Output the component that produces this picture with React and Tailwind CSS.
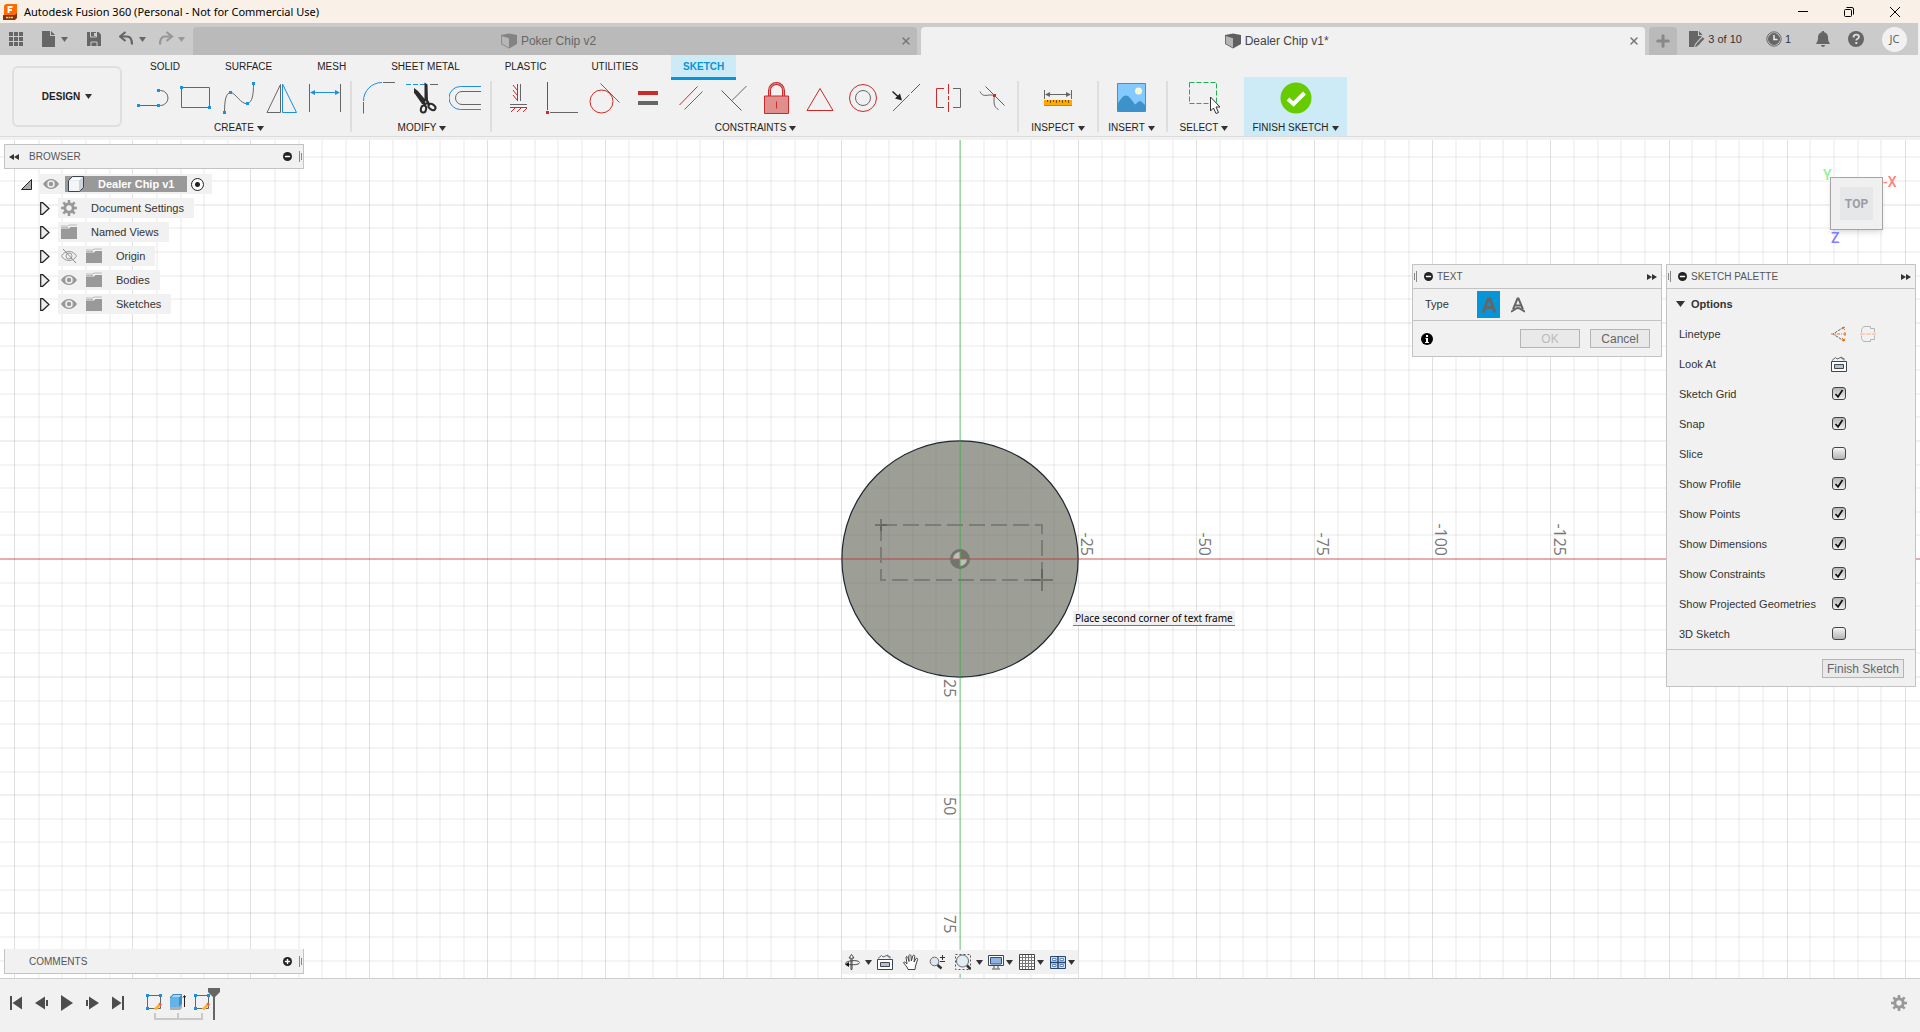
import { Minus, Plus, X } from 'lucide-react';

const BLUE = '#1a8fe3';
const RED = '#cc2a2a';
const GRAY = '#666666';

const TABS = ['SOLID', 'SURFACE', 'MESH', 'SHEET METAL', 'PLASTIC', 'UTILITIES', 'SKETCH'];

const TREE = [
  { name: 'Document Settings', icon: 'gear' },
  { name: 'Named Views', icon: 'folder' },
  { name: 'Origin', icon: 'folder', eye: 'hidden' },
  { name: 'Bodies', icon: 'folder', eye: 'visible' },
  { name: 'Sketches', icon: 'folder', eye: 'visible' },
];

const OPTIONS = [
  { name: 'Sketch Grid', on: true },
  { name: 'Snap', on: true },
  { name: 'Slice', on: false },
  { name: 'Show Profile', on: true },
  { name: 'Show Points', on: true },
  { name: 'Show Dimensions', on: true },
  { name: 'Show Constraints', on: true },
  { name: 'Show Projected Geometries', on: true },
  { name: '3D Sketch', on: false },
];

// Grid: one major cell is 25 mm, split in five
const MAJOR = 118.1;
const MINOR = MAJOR / 5;
const GRID_STEPS = Array.from({ length: 121 }, (_, i) => i - 60);

function Caret({ className = 'text-[#333]' }) {
  return (
    <svg className={`w-[7px] h-[5px] shrink-0 ${className}`} viewBox="0 0 7 5" fill="currentColor">
      <path d="M0 0h7L3.5 5z" />
    </svg>
  );
}

function Icon({ size = 'w-8 h-8', box = 32, children }) {
  return (
    <svg className={`${size} shrink-0`} viewBox={`0 0 ${box} ${box}`} fill="none" stroke={GRAY} strokeWidth="1">
      {children}
    </svg>
  );
}

function Small({ children }) {
  return <Icon size="w-4 h-4" box={16}>{children}</Icon>;
}

function Node({ x, y, color = BLUE }) {
  return <rect x={x - 1.5} y={y - 1.5} width="3" height="3" fill={color} stroke="none" />;
}

/* ---------- ribbon drawings ---------- */

const CREATE = [
  { name: 'Line', art: <><path d="M1.5 23.5h20M21.5 8.5h2a7.5 7.5 0 0 1 0 15h-2" /><Node x={1.5} y={23.5} /><Node x={21.5} y={23.5} /><Node x={21.5} y={8.5} /></> },
  { name: 'Rectangle', art: <><path d="M1.5 5.5h28v20h-28z" /><Node x={1.5} y={5.5} /><Node x={29.5} y={25.5} /></> },
  { name: 'Spline', art: <><path d="M1.5 30.5C1.5 18 3 11 7.5 10.5S18 23 24.5 21.5c5-1.5 6-9 6-20" /><Node x={1.5} y={30.5} /><Node x={7.5} y={10.5} /><Node x={24.5} y={21.5} /><Node x={30.5} y={1.5} /></> },
  { name: 'Mirror', art: <><path d="M1 30.5 14.5 2.5v28z" /><path d="M16.5 2v28.5h14z" stroke={BLUE} /></> },
  { name: 'Dimension', art: <><path d="M.5 2v28M31.5 2v28" /><path d="M3 10.5h26" stroke={BLUE} /><path d="M1 10.5l5-2.5v5zM31 10.5l-5-2.5v5z" fill={BLUE} stroke="none" /></> },
];

const MODIFY = [
  { name: 'Fillet', art: <><path d="M.5 20v11.5M20 .5h12" /><path d="M.5 19A18.5 18.5 0 0 1 19 .5" stroke={BLUE} /></> },
  {
    name: 'Trim',
    art: (
      <>
        <path d="M0 2.5h20" stroke={BLUE} strokeDasharray="5 2" />
        <path d="M24 2.5h8" />
        <path d="M18.5 .5 21.5 2.5 22 20l-3.5-3zM8 6l4 3 8 9.5-2 3.5h-2L9 12l-1-1z" fill="#2b2b2b" stroke="none" />
        <g stroke="#2b2b2b" strokeWidth="2">
          <ellipse cx="17.5" cy="27" rx="2.6" ry="3.6" transform="rotate(12 17.5 27)" />
          <ellipse cx="26" cy="25" rx="3.8" ry="2.6" transform="rotate(35 26 25)" />
          <path d="M19.5 17l3.5 5.5M20.5 18l-2 5.5" strokeWidth="3" />
        </g>
        <circle cx="19.7" cy="20" r=".8" fill="#f1f1f1" stroke="none" />
      </>
    ),
  },
  { name: 'Offset', art: <><path d="M32 4.5H11.5a11.5 11.5 0 0 0 0 23H32" stroke={BLUE} /><path d="M32 9.5H13a6.5 6.5 0 0 0 0 13h19" /></> },
];

const CONSTRAINTS = [
  { name: 'Horizontal/Vertical', art: <><path d="M17.5 2v17M7 22.5h17" /><path d="M14.5 2v17M7 25.5h17M10 3l4 5M10 8l4 5M10 13l4 5M12 26l-4 4M18 26l-4 4M24 26l-4 4" stroke={RED} /></> },
  { name: 'Coincident', art: <><path d="M4 30.5h28" /><path d="M1.5 0v28" stroke={RED} /><Node x={1.5} y={30.5} color={RED} /></> },
  { name: 'Tangent', art: <><path d="M11.5 1.5l19 19" /><circle cx="12.5" cy="19.5" r="11.5" stroke={RED} /></> },
  { name: 'Equal', art: <><path d="M6 9h20v4H6z" fill={RED} stroke="none" /><path d="M6 19h20v4H6z" fill={GRAY} stroke="none" /></> },
  { name: 'Parallel', art: <><path d="M4.5 23l18-18.5" stroke={RED} /><path d="M9.5 27.5l18-18" /></> },
  { name: 'Perpendicular', art: <><path d="M14 18.5 28.5 4" /><path d="M3.5 8.5l20 20" stroke={RED} /></> },
  { name: 'Fix', art: <><path d="M8.5 14V8.5a7 7 0 0 1 14 0V14" stroke={RED} strokeWidth="3" /><path d="M8.5 14V8.5a7 7 0 0 1 14 0V14" stroke="#e39a9a" /><path d="M3.5 14h24v17.5h-24z" fill="#e08f8f" stroke={RED} /><path d="M15.5 19.5v7" stroke={RED} /></> },
  { name: 'Midpoint', art: <path d="M16 6.5l13 22H3z" stroke={RED} /> },
  { name: 'Concentric', art: <><circle cx="16" cy="16" r="13.5" stroke={RED} /><circle cx="16" cy="16" r="7.5" /></> },
  { name: 'Collinear', art: <><path d="M3 29l16.5-16.5" /><path d="M21 11l9-9" stroke={RED} /><path d="M2.5 9.5l6 5.5" stroke="#222" strokeWidth="1.5" /><path d="M12 18.5l-7-2 5-5z" fill="#222" stroke="none" /></> },
  { name: 'Symmetry', art: <><path d="M20 6.5h7.5v19H20" /><path d="M11 6.5H3.5v19H11M15.5 2v10M15.5 14v4M15.5 20v10" stroke={RED} /></> },
  { name: 'Curvature', art: <><path d="M4 9.5c3 7 8 2 14.5 4-1 6-1 12 4 14" /><path d="M9.5 4.5l19 19" stroke={RED} /><Node x={18.5} y={13.5} color={RED} /></> },
];

const INSPECT = [{
  name: 'Measure',
  art: (
    <>
      <path d="M2.5 8v9M29.5 8v9M5 12.5h22" />
      <path d="M3 12.5l5-2.5v5zM29 12.5l-5-2.5v5z" fill={GRAY} stroke="none" />
      <path d="M2 18h28v6H2z" fill="#ffa800" stroke="none" />
      <path d="M2 23.5h28" stroke="#e07f00" />
      <path d="M5.5 18v2M8.5 18v3M11.5 18v2M14.5 18v3M17.5 18v2M20.5 18v3M23.5 18v2M26.5 18v3" stroke="#7a5200" />
    </>
  ),
}];

const INSERT = [{
  name: 'Insert image',
  art: (
    <>
      <path d="M1.5 1.5h28v28h-28z" fill="#82caff" stroke="#3e92cc" />
      <circle cx="22.5" cy="9" r="3.5" fill="#fdf9cf" stroke="none" />
      <path d="M2 21c3-4 5-7.5 8-7.5s6 5 9 9c2-1 3-3.5 5-3.5s3 2.5 5 4V29H2z" fill="#3e92cc" stroke="none" />
    </>
  ),
}];

const SELECT = [{
  name: 'Window select',
  art: (
    <>
      <path d="M1.5 .5h27v21h-27z" stroke="#1fae54" strokeDasharray="5 2" />
      <path d="M22.5 15v14l3-3 2.5 5.5 2.5-1-2.5-5.5h4z" fill="#fff" stroke="#333" />
    </>
  ),
}];

const FINISH = [{
  name: 'Finish',
  art: (
    <>
      <circle cx="16" cy="16" r="15.5" fill="#66cc00" stroke="none" />
      <path d="M8 17l5.5 5L24.5 11" stroke="#fff" strokeWidth="4" />
    </>
  ),
}];

function ToolGroup({ label, tools, className = '' }) {
  return (
    <div className={`flex flex-col items-center pt-[5px] ${className}`}>
      <div className="flex gap-[11px]">
        {tools.map((tool) => (
          <button key={tool.name} aria-label={tool.name} className="w-8 h-8">
            <Icon>{tool.art}</Icon>
          </button>
        ))}
      </div>
      <button className="mt-[7px] h-[14px] flex items-center gap-[3px] text-[10px] leading-[14px] text-[#222] whitespace-nowrap">
        {label}
        <Caret />
      </button>
    </div>
  );
}

function Divider() {
  return <div className="w-[2px] h-[51px] mt-1 bg-[#dedede] shrink-0" />;
}

/* ---------- title and document tabs ---------- */

function TitleBar() {
  return (
    <header className="h-[23px] flex items-center bg-[#f9f1e7] pl-[3px] text-black">
      <svg className="w-[14px] h-4 mr-[7px]" viewBox="0 0 14 16">
        <path d="M1 1.5 3 0h11v13l-2 1H1z" fill="#ff6b00" />
        <path d="M0 11h12l2-2v5l-2 2H0z" fill="#8a3200" />
        <path d="M5.5 9V3h4M5.5 6H9" stroke="#fff" strokeWidth="1.8" fill="none" />
        <path d="M3 13.5h7" stroke="#e8c8b0" strokeWidth="1.5" strokeDasharray="2 .5" />
      </svg>
      <h1 className="font-['Noto_Sans',sans-serif] text-[11px] leading-4">Autodesk Fusion 360 (Personal - Not for Commercial Use)</h1>
      <div className="ml-auto flex items-center pr-[19px] gap-[34px]">
        <button aria-label="Minimize" className="w-3 h-3"><Icon size="w-3 h-3" box={12}><path d="M1 5.5h10" stroke="#000" /></Icon></button>
        <button aria-label="Restore" className="w-3 h-3">
          <Icon size="w-3 h-3" box={12}>
            <rect x="1.5" y="3.5" width="7" height="7" rx="1" stroke="#000" />
            <path d="M3.5 1.5H9A1.5 1.5 0 0 1 10.5 3v5.5" stroke="#000" />
          </Icon>
        </button>
        <button aria-label="Close" className="w-3 h-3"><Icon size="w-3 h-3" box={12}><path d="M1 1l10 10M11 1 1 11" stroke="#000" /></Icon></button>
      </div>
    </header>
  );
}

function DocTab({ name, active }) {
  return (
    <div className={`flex-1 h-7 flex items-center rounded-t pl-1 pr-[5px] ${active ? 'bg-[#f1f1f1] text-[#444]' : 'bg-[#bababa] text-[#666]'}`}>
      <button className="flex-1 flex items-center justify-center gap-1 text-[12px] leading-4">
        <svg className={`w-4 h-4 ${active ? '' : 'opacity-60'}`} viewBox="0 0 16 16">
          <path d="M0 2 8 .5 16 2v9l-8 4.5L0 11z" fill="#5f5f5f" />
          <path d="M.8 3 8 5.2v9.5L.8 10.5z" fill="#b5b5b5" />
        </svg>
        {name}
      </button>
      <button aria-label={`Close ${name}`} className="text-[#777]"><X className="w-3 h-3" strokeWidth={3} /></button>
    </div>
  );
}

function DocumentBar() {
  return (
    <div className="h-8 flex items-end bg-[#cbcbcb] text-[#666] mr-[2px]">
      <div className="w-[193px] h-8 flex items-center pl-2 shrink-0">
        <button aria-label="Data panel">
          <Small><path d="M1 1h4v4H1zM6 1h4v4H6zM11 1h4v4h-4zM1 6h4v4H1zM6 6h4v4H6zM11 6h4v4h-4zM1 11h4v4H1zM6 11h4v4H6zM11 11h4v4h-4z" fill={GRAY} stroke="none" /></Small>
        </button>
        <button aria-label="File" className="ml-[17px] flex items-center gap-1">
          <Small><path d="M1 0h8v5h5v11H1zM10 0l4 4h-4z" fill={GRAY} stroke="none" /></Small>
          <Caret className="text-[#666]" />
        </button>
        <button aria-label="Save" className="ml-[18px]">
          <Small>
            <path d="M1 1h11.5L15 3.5V15H1z" fill={GRAY} stroke="none" />
            <path d="M4.5 1v5h6V1M5 15v-4h6v4" stroke="#cbcbcb" />
            <path d="M8 2h2v3H8z" fill="#cbcbcb" stroke="none" />
          </Small>
        </button>
        <button aria-label="Undo" className="ml-[17px] flex items-center gap-1">
          <Small><path d="M6.5 1 1 5.5 6.5 10M2 5.5h6c4 0 5 3 5 8" strokeWidth="2.2" /></Small>
          <Caret className="text-[#666]" />
        </button>
        <button aria-label="Redo" className="ml-3 flex items-center gap-1 opacity-50">
          <Small><path d="M8.5 1 14 5.5 8.5 10M13 5.5H7c-4 0-5 3-5 8" strokeWidth="2.2" /></Small>
          <Caret className="text-[#666]" />
        </button>
      </div>
      <div className="flex-1 flex gap-1">
        <DocTab name="Poker Chip v2" />
        <DocTab name="Dealer Chip v1*" active />
        <button aria-label="New tab" className="w-7 h-7 rounded-t bg-[#bababa] flex items-center justify-center text-[#888]">
          <Plus className="w-[18px] h-[18px]" strokeWidth={4} />
        </button>
      </div>
      <div className="h-8 flex items-center pl-3 pr-[11px] shrink-0 text-[11px] text-[#333]">
        <button className="flex items-center gap-[3px]">
          <Small>
            <path d="M0 0h9v5h4L6 13l-1 3H0zM10 0l3.5 4H10z" fill={GRAY} stroke="none" />
            <path d="M8 14l6.5-7" strokeWidth="2.5" />
            <path d="M6 16l1-3 2 2z" fill={GRAY} stroke="none" />
          </Small>
          3 of 10
        </button>
        <button className="ml-6 flex items-center gap-[3px]">
          <Small><circle cx="8" cy="8" r="7.2" /><circle cx="8" cy="8" r="5.5" fill={GRAY} /><path d="M8 4v4.5h3.5" stroke="#eee" strokeWidth="1.5" /></Small>
          1
        </button>
        <button aria-label="Notifications" className="ml-6">
          <Small><path d="M8 0c.8 0 1.3.5 1.3 1.3C12 2 13 4 13 6.5c0 3.5 1 4.5 1.7 5.5v1H1.3v-1C2 11 3 10 3 6.5 3 4 4 2 6.7 1.3 6.7.5 7.2 0 8 0zM6 14h4c0 2.5-4 2.5-4 0z" fill={GRAY} stroke="none" /></Small>
        </button>
        <button aria-label="Help" className="ml-[17px]">
          <Small><circle cx="8" cy="8" r="8" fill={GRAY} stroke="none" /><path d="M5.5 6.5c0-4 5.5-3.5 5.5-.5 0 1.8-2.8 1.8-2.8 3.5" stroke="#ddd" strokeWidth="1.8" /><path d="M7.3 11h2v2h-2z" fill="#ddd" stroke="none" /></Small>
        </button>
        <button className="ml-[18px] w-[25px] h-[25px] rounded-full bg-[#f1f1f1] font-['Open_Sans',sans-serif] text-[11px] text-[#555]">JC</button>
      </div>
    </div>
  );
}

function Ribbon() {
  return (
    <div className="flex bg-[#f1f1f1] border-b border-[#dcdcdc]">
      <button className="w-[110px] h-[61px] mt-[11px] ml-3 mr-[15px] shrink-0 rounded-md border-2 border-[#dfdfdf] flex items-center justify-center gap-[5px] text-[10px] font-bold text-[#222]">
        DESIGN
        <Caret />
      </button>
      <div className="flex-1 flex flex-col">
        <nav className="h-[22px] flex items-start gap-[21px] pl-px text-[10px] leading-[14px]">
          {TABS.map((tab) => (
            <button
              key={tab}
              className={`h-[25px] px-3 pt-px whitespace-nowrap border-b-[3px] ${
                tab === 'SKETCH' ? 'bg-[#cdeaf7] text-[#0696d7] font-bold border-[#0696d7]' : 'text-[#222] border-transparent'
              }`}
            >
              {tab}
            </button>
          ))}
        </nav>
        <div className="h-[59px] flex">
          <ToolGroup label="CREATE" tools={CREATE} className="pr-[9px]" />
          <Divider />
          <ToolGroup label="MODIFY" tools={MODIFY} className="pl-[11px] pr-[9px]" />
          <Divider />
          <ToolGroup label="CONSTRAINTS" tools={CONSTRAINTS} className="pl-[11px] pr-[9px]" />
          <Divider />
          <ToolGroup label="INSPECT" tools={INSPECT} className="w-[78px]" />
          <Divider />
          <ToolGroup label="INSERT" tools={INSERT} className="w-[67px] pr-[2px]" />
          <Divider />
          <ToolGroup label="SELECT" tools={SELECT} className="w-[76px] pr-1" />
          <ToolGroup label="FINISH SKETCH" tools={FINISH} className="w-[103px] bg-[#cdeaf7]" />
        </div>
      </div>
    </div>
  );
}

/* ---------- canvas ---------- */

function SketchCanvas() {
  return (
    <svg className="absolute inset-0 w-full h-full" aria-hidden="true">
      <svg x="50%" y="50%" overflow="visible">
        {GRID_STEPS.map((i) => (
          <g key={i} stroke="#000" strokeOpacity={i % 5 === 0 ? 0.12 : 0.045} strokeWidth={i % 5 === 0 ? 1 : 2}>
            <path d={`M${Math.round(i * MINOR)}${i % 5 === 0 ? '.5' : ''} -2000V2000`} />
            <path d={`M-2000 ${Math.round(i * MINOR)}H2000`} />
          </g>
        ))}
        <circle r={MAJOR} fill="#5c5e4f" fillOpacity=".6" stroke="#1c2830" strokeWidth="1.2" />
        <path d="M0 -2000V2000" stroke="#22c83c" strokeOpacity=".33" strokeWidth="2" />
        <path d="M-2000 0H2000" stroke="#cc2020" strokeOpacity=".32" strokeWidth="2" />

        {/* Text frame being placed */}
        <path d="M-79 -34H82V21M-79 -34V21H82" stroke="#7b7c75" strokeWidth="2" strokeDasharray="16 6" fill="none" />
        <path d="M-85 -34h12M-79 -40v12M71 21h22M82 10v22" stroke="#55565099" strokeWidth="2" />

        {/* Origin */}
        <path d="M0 0V-8A8 8 0 0 0 -8 0zM0 0V8A8 8 0 0 0 8 0z" fill="#c0bfb5" />
        <path d="M0 0V-9A9 9 0 0 1 9 0zM0 0V9A9 9 0 0 1 -9 0z" fill="#73746c" />
        <circle r="8.5" fill="none" stroke="#73746c" strokeWidth="3" />
        <path d="M0 -8V8" stroke="#4fae55" strokeWidth="1" />
        <path d="M-8 0H8" stroke="#b06060" strokeWidth="1" />

        <g fill="#777" fontFamily="'Open Sans', sans-serif" fontSize="16">
          {[25, 50, 75, 100, 125].map((n, i) => (
            <text key={n} transform={`translate(${Math.round((i + 1) * MAJOR) + 3} -3) rotate(90)`} textAnchor="end">{`-${n}`}</text>
          ))}
          {[25, 50, 75].map((n, i) => (
            <text key={n} transform={`translate(-16 ${Math.round((i + 1) * MAJOR) + 2}) rotate(90)`}>{n}</text>
          ))}
        </g>
      </svg>
    </svg>
  );
}

function ViewCube() {
  return (
    <div className="absolute top-[37px] right-[37px] w-[53px] h-[53px] border border-[#a5a5a5] bg-[#f0f0f0] shadow-md font-[Roboto,sans-serif] text-[14px] leading-none font-medium">
      <button className="m-[9px] w-[33px] h-[33px] bg-[#e6e7e9] text-[12px] font-bold text-[#999da3]">TOP</button>
      <span className="absolute -left-[8px] -top-[10px] text-[#8cf58c]">Y</span>
      <span className="absolute left-[52px] -top-[3px] text-[#ff8080] whitespace-nowrap">-X</span>
      <span className="absolute left-0 top-[53px] text-[#8080ff]">Z</span>
    </div>
  );
}

function Dot({ children }) {
  return <span className="w-[9px] h-[9px] rounded-full bg-[#222] text-white flex items-center justify-center shrink-0">{children}</span>;
}

function Grip({ className = '' }) {
  return (
    <svg className={`w-[3px] h-[11px] shrink-0 ${className}`} viewBox="0 0 3 11" stroke="#888">
      <path d="M.5 0v11M2.5 2v7" />
    </svg>
  );
}

function Arrows({ className = '' }) {
  return (
    <svg className={`w-[10px] h-[6px] shrink-0 ${className}`} viewBox="0 0 10 6" fill="#333">
      <path d="M0 0l5 3-5 3zM5 0l5 3-5 3z" />
    </svg>
  );
}

function Eye({ hidden }) {
  return (
    <Small>
      <path d="M.5 8C4 2 12 2 15.5 8 12 14 4 14 .5 8z" fill={hidden ? 'none' : '#999'} stroke="#999" />
      <circle cx="8" cy="8" r="3" fill={hidden ? 'none' : '#999'} stroke={hidden ? '#999' : '#f1f1f1'} strokeWidth={hidden ? 1 : 1.5} />
      {hidden && <path d="M2 1l13 14" stroke="#888" />}
    </Small>
  );
}

function Gear() {
  return (
    <Small>
      <path d="M8 0v16M0 8h16M2.3 2.3l11.4 11.4M13.7 2.3 2.3 13.7" stroke="#999" strokeWidth="2.6" />
      <circle cx="8" cy="8" r="4.2" fill="#f1f1f1" stroke="#999" strokeWidth="3" />
    </Small>
  );
}

function Folder() {
  return (
    <Small>
      <path d="M0 4.5h8L9.5 3H16v12H0z" fill="#999" stroke="none" />
      <path d="M0 2h7l1-1h8M0 3.5h7" stroke="#bbb" />
    </Small>
  );
}

function Browser() {
  return (
    <section className="absolute left-1 top-1 w-[300px] text-[11px] leading-5 text-[#333]">
      <header className="h-[25px] flex items-center bg-[#f1f1f1] border border-[#c3c3c3] pl-1">
        <Arrows className="rotate-180" />
        <h2 className="ml-[10px] text-[10px] text-[#555]">BROWSER</h2>
        <button aria-label="Collapse browser" className="ml-auto"><Dot><Minus className="w-[7px] h-[7px]" strokeWidth={5} /></Dot></button>
        <Grip className="ml-[7px] mr-px" />
      </header>
      <ul className="mt-[5px] flex flex-col gap-1">
        <li className="flex items-center pl-[17px]">
          <svg className="w-[11px] h-[11px] mr-2" viewBox="0 0 11 11"><path d="M10.5 .5v10H.5z" fill="#aaa" stroke="#222" /></svg>
          <div className="h-5 flex items-center bg-[#f1f1f1] pl-[3px] pr-2">
            <Eye />
            <button className="ml-[6px] h-4 bg-[#999] text-white font-bold flex items-center pl-[3px] pr-[13px] leading-4">
              <Small>
                <path d="M.5 4.5 4.5 .5h11v11l-4 4H.5z" fill="#cdd3da" stroke="#3a4450" />
                <path d="M1 5h10v10H1z" fill="#f3f5f7" stroke="none" />
                <path d="M1.5 4.5 4.8 1.3h9.5L11 4.5z" fill="#fff" stroke="none" />
              </Small>
              <span className="ml-[14px]">Dealer Chip v1</span>
            </button>
            <input type="radio" defaultChecked aria-label="Activate Dealer Chip v1" className="appearance-none ml-1 w-[13px] h-[13px] rounded-full border border-[#222] bg-[radial-gradient(circle,#222_2px,#fff_3px)]" />
          </div>
        </li>
        {TREE.map((item) => (
          <li key={item.name} className="flex items-center pl-9">
            <button aria-label={`Expand ${item.name}`} className="mr-2">
              <svg className="w-[10px] h-[13px]" viewBox="0 0 10 13"><path d="M.7 .7h2L9 6.5l-6.3 5.8h-2z" fill="#eee" stroke="#222" strokeWidth="1.2" /></svg>
            </button>
            <div className="h-5 flex items-center bg-[#f1f1f1] pl-[3px] pr-[10px]">
              {item.eye && <span className="mr-[9px]"><Eye hidden={item.eye === 'hidden'} /></span>}
              {item.icon === 'gear' ? <Gear /> : <Folder />}
              <span className="ml-[14px]">{item.name}</span>
            </div>
          </li>
        ))}
      </ul>
    </section>
  );
}

function PanelHeader({ title }) {
  return (
    <header className="h-6 flex items-center border-b border-[#c3c3c3] pl-px pr-1">
      <Grip className="rotate-180" />
      <button aria-label={`Collapse ${title}`} className="ml-[7px]"><Dot><Minus className="w-[7px] h-[7px]" strokeWidth={5} /></Dot></button>
      <h2 className="ml-1 text-[10px] text-[#555]">{title}</h2>
      <Arrows className="ml-auto" />
    </header>
  );
}

function PanelButton({ disabled, className = '', children }) {
  return (
    <button disabled={disabled} className={`h-[19px] border border-[#b5b5b5] bg-[#e9e9e9] text-[12px] leading-4 text-[#666] disabled:text-[#bbb] ${className}`}>
      {children}
    </button>
  );
}

function TextDialog() {
  return (
    <section className="absolute top-[124px] right-[258px] w-[250px] bg-[#f1f1f1] border border-[#c3c3c3] text-[11px] text-[#333]">
      <PanelHeader title="TEXT" />
      <div className="h-8 flex items-center pl-3 border-b border-[#c3c3c3]">
        <span className="w-[52px]">Type</span>
        <button aria-label="Text" className="w-[23px] h-[27px] bg-[#0696d7] flex items-center justify-center">
          <Small><path d="M.5 15.5 6 .5h4l5.5 15h-3.3L11 12H5l-1.2 3.5zM6 9h4L8 3.5z" fill="#666" stroke="none" fillRule="evenodd" /></Small>
        </button>
        <button aria-label="Text on path" className="ml-[10px]">
          <Small><path d="M3 12.5 7.5 1.5h1L13 12.5M5 8.5h6" strokeWidth="2" /><path d="M1 14.5c2 0 4-3.5 7-3.5s5 3.5 7 3.5" strokeWidth="2" /></Small>
        </button>
      </div>
      <div className="h-[35px] flex items-center pl-2 pr-[11px]">
        <button aria-label="Info">
          <Icon size="w-3 h-3" box={12}><circle cx="6" cy="6" r="6" fill="#000" stroke="none" /><path d="M5 2h2v2H5zM4.5 5H7v4h1v1H4V9h1V6h-.5z" fill="#fff" stroke="none" /></Icon>
        </button>
        <PanelButton disabled className="ml-auto w-[60px]">OK</PanelButton>
        <PanelButton className="ml-[10px] w-[60px]">Cancel</PanelButton>
      </div>
    </section>
  );
}

function LookAt() {
  return (
    <Small>
      <path d="M.5 5.5h15v10H.5z" fill="#fff" stroke="#3c4650" />
      <path d="M3.5 8.5h9v4h-9z" fill="#b8bfc8" stroke="#3c4650" />
      <path d="M1 4.5 4.5 1.5 6 3l5-2v2l2-.5v2" stroke="#5c6670" />
    </Small>
  );
}

function SketchPalette() {
  return (
    <section className="absolute top-[124px] right-1 w-[250px] bg-[#f1f1f1] border border-[#c3c3c3] text-[11px] text-[#333]">
      <PanelHeader title="SKETCH PALETTE" />
      <button className="h-[30px] flex items-center gap-[6px] pl-[9px] font-bold">
        <svg className="w-[9px] h-[6px]" viewBox="0 0 9 6"><path d="M0 0h9L4.5 6z" fill="#333" /></svg>
        Options
      </button>
      <div className="h-[30px] flex items-center pl-3">
        <span className="w-[152px]">Linetype</span>
        <button aria-label="Construction">
          <Small>
            <path d="M13 1 2 8l11 7" strokeDasharray="3 1" />
            <path d="M0 8h16" stroke="#e8721c" strokeDasharray="3 1 1 1" />
            <path d="M11 1l3 3M14 1l-3 2M11 15l3-2M14 15l-3-3M14 6v4" stroke="#e8721c" />
          </Small>
        </button>
        <button aria-label="Centerline" className="ml-[13px]">
          <Small>
            <path d="M1.5 6.5v-3l2-3h7v2h4v4M1.5 9.5v3l2 3h7v-2h4v-4" stroke="#b5b5b5" />
            <path d="M0 8h16" stroke="#f3b48c" strokeDasharray="5 1" />
          </Small>
        </button>
      </div>
      <div className="h-[30px] flex items-center pl-3">
        <span className="w-[152px]">Look At</span>
        <button aria-label="Look At"><LookAt /></button>
      </div>
      {OPTIONS.map((option) => (
        <label key={option.name} className="h-[30px] flex items-center pl-3">
          <span className="w-[153px] whitespace-nowrap">{option.name}</span>
          <span className="relative w-[14px] h-[14px]">
            <input
              type="checkbox"
              defaultChecked={option.on}
              className="peer appearance-none block w-[14px] h-[13px] rounded-[3px] border border-[#444] bg-linear-to-b from-[#f4f4f4] to-[#b4b4b4] checked:from-[#b4b4b4] checked:to-[#f0f0f0]"
            />
            <svg className="hidden peer-checked:block absolute inset-0 w-[14px] h-[13px] pointer-events-none" viewBox="0 0 14 13">
              <path d="M3.5 7 6 9.8 10.5 3" stroke="#111" strokeWidth="1.7" fill="none" />
            </svg>
          </span>
        </label>
      ))}
      <div className="h-[37px] flex items-start justify-end pt-[9px] pr-[11px] border-t border-[#c3c3c3]">
        <PanelButton className="w-[82px]">Finish Sketch</PanelButton>
      </div>
    </section>
  );
}

function Comments() {
  return (
    <section className="absolute left-1 bottom-1 w-[300px] h-[25px] flex items-center bg-[#f1f1f1] border border-t-0 border-[#c3c3c3] pl-6">
      <h2 className="text-[10px] text-[#555]">COMMENTS</h2>
      <button aria-label="Expand comments" className="ml-auto"><Dot><Plus className="w-[7px] h-[7px]" strokeWidth={5} /></Dot></button>
      <Grip className="ml-[7px] mr-px" />
    </section>
  );
}

function NavBar() {
  return (
    <div className="absolute bottom-1 left-1/2 -translate-x-1/2 w-[236px] h-6 flex items-center bg-[#f1f1f1] pl-[2px]">
      <button aria-label="Orbit" className="flex items-center gap-[5px]">
        <Small>
          <path d="M7 15.5V4H5l2.5-3.5L10 4H8v11.5z" fill="#fff" stroke="#444" />
          <path d="M2 10c-3-3 13-5 13.5-1.5C15 11 9 11 3 10.5" stroke="#444" />
          <path d="M1 10.5 5 8v5z" fill="#111" stroke="none" />
        </Small>
        <Caret />
      </button>
      <button aria-label="Look At" className="ml-[5px]"><LookAt /></button>
      <button aria-label="Pan" className="ml-[10px]">
        <Small><path d="M5 15.5c0-2-3.5-5-4.5-7 1-1 2.5 0 3.5 1.5L3 3c1-1 1.7 0 2 1l1 3.5-.2-6c1-1 2-.8 2.2.3l.3 5.2L10 1.5c1-.8 2 0 1.7 1L11 8l2-3.5c1-.7 2 .1 1.6 1L12.5 12l-.5 3.5z" fill="#fff" stroke="#444" /></Small>
      </button>
      <button aria-label="Zoom" className="ml-[10px]">
        <Small>
          <circle cx="5.5" cy="7.5" r="4.3" fill="#dce9ec" stroke="#667" />
          <path d="M8.5 11l4 3.5" stroke="#333" strokeWidth="2.5" />
          <path d="M11 3.5h5M13.5 1v5M11 7.5h5" stroke="#333" />
        </Small>
      </button>
      <button aria-label="Fit" className="ml-[10px] flex items-center gap-[5px]">
        <Small>
          <path d="M.5 .5h15v15H.5z" stroke="#555" strokeDasharray="2 2" />
          <circle cx="7.5" cy="7" r="6" fill="#dfeef0" stroke="#667" />
          <path d="M12 11.5l3.5 3.5" stroke="#333" strokeWidth="2.5" />
        </Small>
        <Caret />
      </button>
      <button aria-label="Display settings" className="ml-[5px] flex items-center gap-[2px]">
        <Small>
          <path d="M.5 1.5h15v10H.5z" fill="#fff" stroke="#444" />
          <path d="M2.5 3.5h11v6.5h-11z" fill="#8fb3e0" stroke="#2c4f86" />
          <path d="M6 12v2.5M10 12v2.5M4 15h8" stroke="#555" />
        </Small>
        <Caret />
      </button>
      <button aria-label="Grid settings" className="ml-[6px] flex items-center gap-[2px]">
        <Small><path d="M.5 .5h15v15H.5z" fill="#fff" stroke="#444" /><path d="M3.5 1v14M6.5 1v14M9.5 1v14M12.5 1v14M1 3.5h14M1 6.5h14M1 9.5h14M1 12.5h14" stroke="#777" /></Small>
        <Caret />
      </button>
      <button aria-label="Viewports" className="ml-[6px] flex items-center gap-[2px]">
        <Small>
          <path d="M.5 2.5h15v12H.5z" fill="#cfe0f4" stroke="#2c4468" />
          <path d="M8 2.5v12M.5 8.5h15" stroke="#2c4468" strokeWidth="1.5" />
          <path d="M2.5 4.5H6v2H2.5zM10 4.5h3.5v2H10zM2.5 10.5H6v2H2.5zM10 10.5h3.5v2H10z" fill="#fff" stroke="#5b86bf" />
        </Small>
        <Caret />
      </button>
    </div>
  );
}

/* ---------- timeline ---------- */

const PLAYBACK = [
  { name: 'Go to start', d: 'M1 1h2v14H1zM13 1.5v13L3.5 8z' },
  { name: 'Step back', d: 'M11 1.5v13L1 8zM12 5h2v6h-2z' },
  { name: 'Play', d: 'M2 0l12 8-12 8z' },
  { name: 'Step forward', d: 'M5 1.5v13L15 8zM2 5h2v6H2z' },
  { name: 'Go to end', d: 'M13 1h2v14h-2zM3 1.5v13L12.5 8z' },
];

function SketchFeature() {
  return (
    <button aria-label="Sketch feature">
      <Small>
        <path d="M1.5 1.5h13v13h-13z" />
        <Node x={1.5} y={1.5} /><Node x={14.5} y={1.5} /><Node x={1.5} y={14.5} />
        <path d="M9 15.5l5-5" stroke="#f7b733" strokeWidth="3" />
        <path d="M13.5 11l1.5-1.5" stroke="#ef5350" strokeWidth="3" />
      </Small>
    </button>
  );
}

function Timeline() {
  return (
    <footer className="h-[54px] flex items-start bg-[#f1f1f1] border-t border-[#cfcfcf] pl-[9px] pr-[13px]">
      <div className="flex gap-[9px] mt-4">
        {PLAYBACK.map((button) => (
          <button key={button.name} aria-label={button.name} className="w-4 h-4">
            <Small><path d={button.d} fill="#4d4d4d" stroke="none" /></Small>
          </button>
        ))}
      </div>
      <div className="relative ml-[21px] mt-[15px] flex flex-col">
        <div className="flex gap-2">
          <SketchFeature />
          <button aria-label="Extrude feature">
            <Small>
              <path d="M0 12h9l3-2v4l-2 2H0z" fill="#b0b0b0" stroke="none" />
              <path d="M0 3 3 0h9v10l-3 3H0z" fill="#3a8dcb" stroke="none" />
              <path d="M0 4h9v9H0z" fill="#66b3ea" stroke="none" />
              <path d="M1 3.5 3.5 1h8L9 3.5z" fill="#a5d6f7" stroke="none" />
              <path d="M14.5 13V2M13 3.5l1.5-2 1.5 2" stroke="#222" />
            </Small>
          </button>
          <SketchFeature />
        </div>
        <svg className="w-16 h-2 mt-[3px]" viewBox="0 0 64 8" fill="none" stroke="#c9c9c9" strokeWidth="2">
          <path d="M9 0v6h47V0M32 0v6" />
        </svg>
        <svg className="absolute left-[62px] -top-[6px] w-3 h-[33px]" viewBox="0 0 12 33" fill="#666">
          <path d="M0 0h12v4L7 9v23H5V9L0 4z" />
        </svg>
      </div>
      <button aria-label="Timeline settings" className="ml-auto mt-4"><Gear /></button>
    </footer>
  );
}

export default function App() {
  return (
    <div className="min-h-screen flex flex-col bg-[#f1f1f1] font-['Liberation_Sans',Arial,sans-serif] select-none">
      <TitleBar />
      <DocumentBar />
      <Ribbon />
      <main className="relative flex-1 mt-[3px] bg-white overflow-hidden">
        <SketchCanvas />
        <ViewCube />
        <Browser />
        <TextDialog />
        <SketchPalette />
        <div role="tooltip" className="absolute left-1/2 top-1/2 ml-[113px] mt-[52px] h-[15px] px-[2px] bg-[#f0f0f0] border-b border-[#777] font-['Noto_Sans',sans-serif] text-[10px] leading-[14px] text-black whitespace-nowrap">
          Place second corner of text frame
        </div>
        <Comments />
        <NavBar />
      </main>
      <Timeline />
    </div>
  );
}
